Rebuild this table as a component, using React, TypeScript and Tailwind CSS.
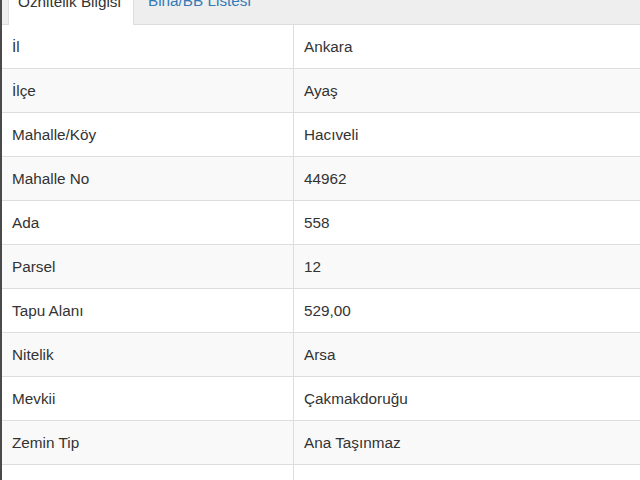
import React from "react";

const rows: [string, string][] = [
  ["İl", "Ankara"],
  ["İlçe", "Ayaş"],
  ["Mahalle/Köy", "Hacıveli"],
  ["Mahalle No", "44962"],
  ["Ada", "558"],
  ["Parsel", "12"],
  ["Tapu Alanı", "529,00"],
  ["Nitelik", "Arsa"],
  ["Mevkii", "Çakmakdoruğu"],
  ["Zemin Tip", "Ana Taşınmaz"],
  ["", ""],
];

export default function App() {
  return (
    <div
      className="w-[640px] h-[480px] overflow-hidden bg-white border-l-2 border-[#4a4a4a] text-[#333] text-[15.3px]"
      style={{ fontFamily: '"Liberation Sans", Arial, sans-serif' }}
    >
      <div className="h-[25px] bg-[#eeeeee] border-b border-[#dddddd] flex items-end pl-[6px] overflow-visible">
        <div className="bg-white border-x border-[#dddddd] w-[126px] pl-[9px] pb-[13px] leading-[20px] -mb-px">
          Öznitelik Bilgisi
        </div>
        <div className="pl-[14px] pb-[13px] leading-[20px] text-[#337ab7]">Bina/BB Listesi</div>
      </div>
      <div className="flex flex-col">
        {rows.map(([k, v], i) => (
          <div
            key={i}
            className={`flex h-[44px] border-b border-[#dddddd] ${i % 2 === 1 ? "bg-[#f9f9f9]" : "bg-white"}`}
          >
            <div className="w-[292px] shrink-0 border-r border-[#dddddd] pl-[10px] pt-[2px] flex items-center">{k}</div>
            <div className="flex-1 pl-[10px] pt-[2px] flex items-center">{v}</div>
          </div>
        ))}
      </div>
    </div>
  );
}
